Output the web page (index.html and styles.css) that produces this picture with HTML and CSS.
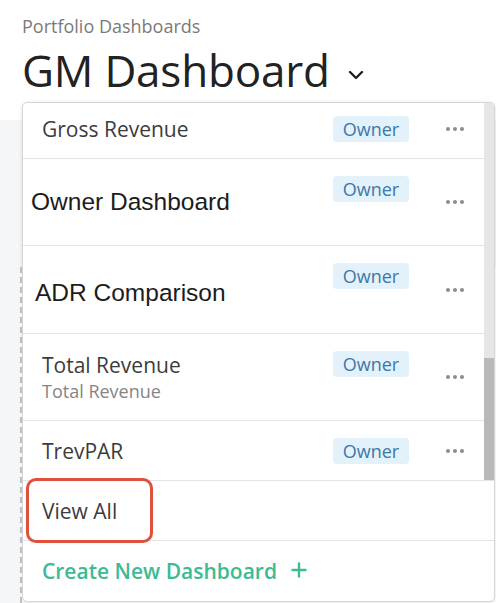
FILE: index.html
```html
<!DOCTYPE html>
<html lang="en">
<head>
<meta charset="utf-8">
<title>GM Dashboard</title>
<link rel="stylesheet" href="styles.css">
</head>
<body>
<div class="page">
  <header class="header">
    <div class="breadcrumb">Portfolio Dashboards</div>
    <h1 class="title">GM Dashboard
      <svg class="chevron" width="16" height="10" viewBox="0 0 16 10"><polyline points="2,2 8,8 14,2" fill="none" stroke="#222" stroke-width="2.4" stroke-linecap="round" stroke-linejoin="round"/></svg>
    </h1>
  </header>
  <main class="content">
    <div class="canvas"></div>
  </main>

  <div class="dropdown">
    <div class="list">
      <div class="rows">
        <div class="rows-inner">
          <div class="row row--first">
            <div class="text"><div class="name">Gross Revenue</div></div>
            <span class="badge">Owner</span>
            <span class="dots"><i></i><i></i><i></i></span>
          </div>
          <div class="row row--tall row--pad-s">
            <div class="text"><div class="name name--legacy">Owner Dashboard</div></div>
            <span class="badge">Owner</span>
            <span class="dots"><i></i><i></i><i></i></span>
          </div>
          <div class="row row--taller row--pad-m">
            <div class="text text--low"><div class="name name--legacy">ADR Comparison</div></div>
            <span class="badge">Owner</span>
            <span class="dots"><i></i><i></i><i></i></span>
          </div>
          <div class="row row--tall">
            <div class="text"><div class="name">Total Revenue</div><div class="sub">Total Revenue</div></div>
            <span class="badge">Owner</span>
            <span class="dots"><i></i><i></i><i></i></span>
          </div>
          <div class="row row--last">
            <div class="text"><div class="name">TrevPAR</div></div>
            <span class="badge">Owner</span>
            <span class="dots"><i></i><i></i><i></i></span>
          </div>
        </div>
      </div>
      <div class="scrollbar"><div class="thumb"></div></div>
    </div>
    <div class="action action--view">View All</div>
    <div class="action action--create">Create New Dashboard
      <svg class="plus" width="16" height="16" viewBox="0 0 16 16"><path d="M8 1.5V14.5M1.5 8H14.5" stroke="#3dba94" stroke-width="2.4" stroke-linecap="round"/></svg>
    </div>
    <div class="highlight"></div>
  </div>
</div>
</body>
</html>
```

FILE: styles.css
```css
* { box-sizing: border-box; }
html, body { margin: 0; padding: 0; background: #fff; }
body {
  font-family: "Open Sans", "Liberation Sans", sans-serif;
  width: 496px;
  height: 603px;
  overflow: hidden;
}
.page { position: relative; width: 496px; height: 603px; overflow: hidden; }

.header { height: 120px; padding: 14px 0 0 22px; background: #fff; }
.breadcrumb { font-size: 18px; line-height: 24px; color: #7a7a7a; height: 26px; }
.title {
  margin: 0;
  font-size: 44px;
  line-height: 60px;
  font-weight: 400;
  color: #222;
  display: flex;
  align-items: center;
  gap: 18px;
  letter-spacing: -0.2px;
}
.chevron { margin-top: 9px; }

.content { height: 483px; background: #f5f6f8; padding: 147px 0 0 20px; }
.canvas { height: 336px; border-left: 2px dashed #c4c6c9; background: #fff; }

.dropdown {
  position: absolute;
  left: 22px;
  top: 102px;
  width: 473px;
  height: 500px;
  background: #fff;
  border: 1px solid #d6d6d6;
  border-radius: 5px;
  box-shadow: 0 1px 4px rgba(0, 0, 0, 0.12);
  display: flex;
  flex-direction: column;
}

.list { display: flex; height: 377px; }
.rows { flex: 1; overflow: hidden; }
.rows-inner { margin-top: -4px; }
.scrollbar { width: 10px; background: #e6e6e6; display: flex; flex-direction: column; }
.thumb { margin-top: auto; height: 122px; background: #b9b9b9; }

.row {
  display: flex;
  align-items: center;
  padding: 0 20px 0 19px;
  border-bottom: 1px solid #e4e4e4;
  height: 87px;
}
.row--first { height: 60px; }
.row--tall { height: 87px; }
.row--taller { height: 88px; }
.row--last { height: 60px; border-bottom: none; }
.row--pad-s { padding-left: 8px; }
.row--pad-m { padding-left: 12px; }

.text { flex: 1; }
.text--low { padding-top: 6px; }
.name { font-size: 21px; line-height: 28px; color: #3c3c3c; }
.name--legacy { font-family: "Liberation Sans", Arial, sans-serif; font-size: 24.5px; color: #1c1c1c; }
.sub { font-size: 18px; line-height: 24px; color: #858585; }

.badge {
  align-self: flex-start;
  margin-top: 17px;
  width: 76px;
  height: 26px;
  border-radius: 4px;
  background: #e3f1fb;
  color: #3d78a6;
  font-size: 18px;
  line-height: 26px;
  text-align: center;
}
.dots { display: flex; gap: 3px; margin-left: 37px; width: 18px; }
.dots i { display: block; width: 4px; height: 4px; border-radius: 50%; background: #8c8c8c; }

.action {
  height: 60px;
  border-top: 1px solid #e4e4e4;
  padding-left: 19px;
  display: flex;
  align-items: center;
  font-size: 21px;
}
.action--view { color: #3c3c3c; }
.action--create { color: #3dba94; font-weight: 600; gap: 14px; height: 61px; }
.plus { margin-top: -2px; }

.highlight {
  position: absolute;
  left: 3px;
  top: 375px;
  width: 127px;
  height: 65px;
  border: 3px solid #e0503a;
  border-radius: 10px;
}
```
